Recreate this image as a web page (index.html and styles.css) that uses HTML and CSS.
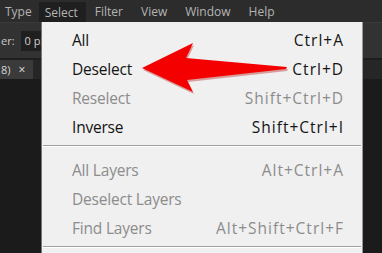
FILE: index.html
```html
<!DOCTYPE html>
<html lang="en">
<head>
  <meta charset="UTF-8" />
  <title>Select Menu</title>
  <link rel="stylesheet" href="styles.css">
</head>
<body>
  <div class="app">
    <div class="menubar">
      <span class="menu-item first">Type</span>
      <span class="menu-item active">Select</span>
      <span class="menu-item">Filter</span>
      <span class="menu-item">View</span>
      <span class="menu-item">Window</span>
      <span class="menu-item">Help</span>
    </div>

    <div class="workspace">
      <div class="options-bar">
        <span class="label">er:</span>
        <span class="field">0 px</span>
      </div>
      <div class="tab-row">
        <span class="tab">8) <span class="close">&times;</span></span>
      </div>
      <div class="canvas"></div>
    </div>

    <div class="dropdown">
      <div class="row"><span>All</span><span class="key">Ctrl+A</span></div>
      <div class="row"><span>Deselect</span><span class="key">Ctrl+D</span></div>
      <div class="row disabled"><span>Reselect</span><span class="key">Shift+Ctrl+D</span></div>
      <div class="row"><span>Inverse</span><span class="key">Shift+Ctrl+I</span></div>
      <div class="sep"></div>
      <div class="row disabled"><span>All Layers</span><span class="key">Alt+Ctrl+A</span></div>
      <div class="row disabled"><span>Deselect Layers</span><span class="key"></span></div>
      <div class="row disabled"><span>Find Layers</span><span class="key">Alt+Shift+Ctrl+F</span></div>
      <div class="sep"></div>
    </div>

    <!-- red callout arrow pointing at Deselect -->
    <svg class="arrow" width="160" height="60" viewBox="0 0 160 60">
      <path d="M1 26 L52 1 Q49 8 45 16 L146 25 L145 27 L46 38 Q49 44 52 50 Z" fill="#b00000" opacity="0.35" transform="translate(1 2)"/>
      <path d="M1 26 L52 1 Q49 8 45 16 L146 25 L145 27 L46 38 Q49 44 52 50 Z" fill="#f40000"/>
    </svg>
  </div>
</body>
</html>
```

FILE: styles.css
```css
* {
  margin: 0;
  padding: 0;
  box-sizing: border-box;
}

body {
  width: 382px;
  height: 253px;
  overflow: hidden;
  background: #1b1b1b;
  font-family: "Open Sans", "Noto Sans", sans-serif;
}

.app {
  position: relative;
  width: 382px;
  height: 253px;
  display: flex;
  flex-direction: column;
}

.menubar {
  height: 22px;
  display: flex;
  align-items: stretch;
  background: #2c2c2c;
  font-size: 12px;
  color: #b4b4b4;
}

.menu-item {
  display: flex;
  align-items: center;
  padding: 1px 9px 0 9px;
}

.menu-item.first {
  padding-left: 5px;
  padding-right: 7px;
}

.menu-item.active {
  background: #1f1f1f;
  padding: 1px 8px 0 6px;
  margin-top: 2px;
}

.workspace {
  flex: 1;
  display: flex;
  flex-direction: column;
}

.options-bar {
  height: 36px;
  background: #323232;
  display: flex;
  align-items: center;
  gap: 6px;
  padding-left: 1px;
  font-size: 11px;
  color: #c8c8c8;
  border-top: 1px solid #3a3a3a;
}

.field {
  background: #1f1f1f;
  color: #d0d0d0;
  height: 20px;
  width: 40px;
  display: flex;
  align-items: center;
  padding-left: 4px;
}

.tab-row {
  height: 21px;
  background: #262626;
  display: flex;
  border-top: 2px solid #1e1e1e;
}

.tab {
  background: #3a3a3a;
  color: #d6d6d6;
  font-size: 11px;
  display: flex;
  align-items: center;
  gap: 8px;
  padding: 0 8px 0 1px;
}

.close {
  font-size: 12px;
  color: #e0e0e0;
}

.canvas {
  flex: 1;
  background: #1b1b1b;
}

.dropdown {
  position: absolute;
  left: 41px;
  top: 22px;
  width: 322px;
  height: 240px;
  background: #f0f0f0;
  border-left: 1px solid #777;
  border-right: 1px solid #999;
  padding: 3px 19px 0 30px;
  font-size: 15.5px;
  color: #141414;
  letter-spacing: -0.2px;
}

.row {
  height: 29px;
  display: flex;
  justify-content: space-between;
  align-items: center;
}

.key {
  letter-spacing: 1px;
  margin-right: -1px;
}

.row.disabled {
  color: #8c8c8c;
}

.sep {
  height: 1px;
  background: #a0a0a0;
  margin: 4px -18px 9px -29px;
  box-shadow: 0 1px 0 #ffffff;
}

.arrow {
  position: absolute;
  left: 141px;
  top: 42px;
}
```
